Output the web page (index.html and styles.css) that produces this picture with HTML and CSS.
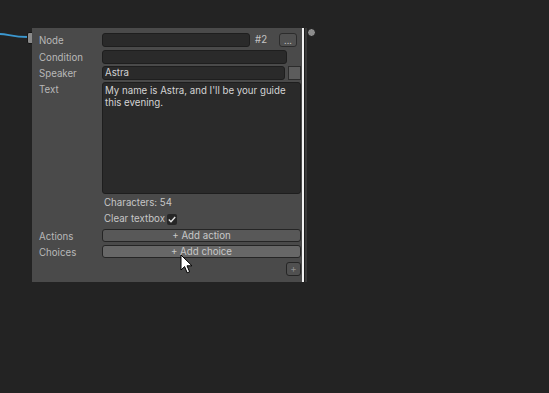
FILE: index.html
```
<!DOCTYPE html>
<html lang="en">

<head>
    <meta charset="UTF-8">
    <title>Dialogue node</title>
    <link rel="stylesheet" href="styles.css">
</head>

<body>
    <div class="graph">
        <!-- incoming edge -->
        <svg class="edge" width="32" height="20" viewBox="0 0 32 20">
            <path d="M0 6 C 8 6, 12 9, 28 9" stroke="#3b97cf" stroke-width="2" fill="none" />
        </svg>
        <div class="port-in"></div>

        <div class="node">
            <div class="row row-node">
                <span class="label">Node</span>
                <div class="field field-node"></div>
                <span class="node-id">#2</span>
                <button class="btn btn-more">...</button>
            </div>
            <div class="row row-cond">
                <span class="label">Condition</span>
                <div class="field field-cond"></div>
            </div>
            <div class="row row-speaker">
                <span class="label">Speaker</span>
                <div class="field field-cond">Astra</div>
                <div class="swatch"></div>
            </div>
            <div class="row row-text">
                <span class="label">Text</span>
                <div class="field textarea">My name is Astra, and I'll be your guide this evening.</div>
            </div>
            <div class="row row-info">
                <span class="label"></span>
                <span class="info">Characters: 54</span>
            </div>
            <div class="row row-check">
                <span class="label"></span>
                <span class="info">Clear textbox</span>
                <span class="checkbox">
                    <svg width="8" height="7" viewBox="0 0 8 7">
                        <path d="M0.8 3.6 L3 5.8 L7.2 1" stroke="#e6e6e6" stroke-width="1.4" fill="none" />
                    </svg>
                </span>
            </div>
            <div class="row row-btn">
                <span class="label">Actions</span>
                <button class="btn btn-wide">+ Add action</button>
            </div>
            <div class="row row-btn">
                <span class="label">Choices</span>
                <button class="btn btn-wide hover">+ Add choice</button>
            </div>
            <div class="row row-end">
                <button class="btn btn-plus">+</button>
            </div>
        </div>
        <div class="selection-bar"></div>
        <div class="port-out"></div>

        <svg class="cursor" width="13" height="21" viewBox="0 0 13 21">
            <path d="M1 1 L1 16 L4.6 12.6 L7.2 18.8 L9.6 17.8 L7 11.8 L12 11.8 Z" fill="#fff" stroke="#000" stroke-width="1" />
        </svg>
    </div>
</body>

</html>
```

FILE: styles.css
```
/* page */
body,
html {
    margin: 0;
    height: 100%;
    background-color: #232323;
    font-family: Inter, "Liberation Sans", sans-serif;
    font-size: 9.7px;
    color: #c2c2c2;
}

.graph {
    position: relative;
    width: 549px;
    height: 393px;
    overflow: hidden;
}

.edge {
    position: absolute;
    left: 0;
    top: 28px;
}

.port-in {
    position: absolute;
    left: 27px;
    top: 32px;
    width: 4px;
    height: 10px;
    background-color: #8a8a8a;
    border: 1px solid #151515;
    border-radius: 2px 0 0 2px;
}

/* node box */
.node {
    position: absolute;
    left: 32px;
    top: 28px;
    width: 270px;
    height: 254px;
    box-sizing: border-box;
    padding: 0 1px 0 7px;
    background-color: #4a4a4a;
    display: flex;
    flex-direction: column;
}

.selection-bar {
    position: absolute;
    left: 302px;
    top: 28px;
    width: 2px;
    height: 254px;
    background-color: #f2f2f2;
    border-right: 1px solid #1c1c1c;
    box-shadow: 2px 0 0 #3a3a3a;
}

.port-out {
    position: absolute;
    left: 307px;
    top: 28px;
    width: 7px;
    height: 7px;
    border-radius: 50%;
    background-color: #8c8c8c;
    border: 1px solid #151515;
}

.row {
    display: flex;
    align-items: center;
    height: 14px;
}

.row-node {
    margin-top: 5px;
}

.row-cond {
    margin-top: 3px;
}

.row-speaker {
    margin-top: 2px;
}

.label {
    width: 63px;
    flex-shrink: 0;
    color: #b8b8b8;
    align-self: flex-start;
    line-height: 14px;
    padding-top: 1px;
}

.field {
    box-sizing: border-box;
    height: 14px;
    background-color: #2a2a2a;
    border: 1px solid #1e1e1e;
    border-radius: 3px;
    padding: 0 2px;
    line-height: 12px;
    color: #d4d4d4;
}

.field-node {
    width: 148px;
}

.node-id {
    margin-left: 5px;
    width: 24px;
    color: #c4c4c4;
    align-self: flex-start;
    line-height: 13px;
}

.field-cond {
    width: 185px;
}

.swatch {
    margin-left: 3px;
    width: 13px;
    height: 14px;
    box-sizing: border-box;
    background-color: #5c5c5c;
    border: 1px solid #2c2c2c;
}

.row-text {
    height: 112px;
    margin-top: 2px;
    align-items: flex-start;
}

.textarea {
    width: 200px;
    height: 112px;
    line-height: 12px;
    padding: 2px 2px;
}

.row-info {
    margin-top: 2px;
}

.row-check {
    margin-top: 2px;
}

.info {
    padding-left: 2px;
    color: #c6c6c6;
    line-height: 14px;
}

.checkbox {
    margin-left: 2px;
    width: 10px;
    height: 11px;
    background-color: #262626;
    border-radius: 2px;
    display: flex;
    align-items: center;
    justify-content: center;
}

.btn {
    font-family: inherit;
    font-size: 9.7px;
    color: #c8c8c8;
    background-color: #585858;
    border: 1px solid #252525;
    border-radius: 3px;
    padding: 0;
    box-sizing: border-box;
    cursor: pointer;
}

.btn-more {
    width: 18px;
    height: 14px;
    line-height: 14px;
    padding-bottom: 2px;
    font-size: 9px;
    color: #bdbdbd;
    background-color: #505050;
    border-color: #2c2c2c;
}

.row-btn {
    margin-top: 3px;
    height: 13px;
}

.btn-wide {
    width: 200px;
    height: 13px;
    line-height: 11px;
}

.btn-wide.hover {
    background-color: #676767;
}

.row-end {
    justify-content: flex-end;
    margin-top: 4px;
}

.btn-plus {
    width: 15px;
    height: 14px;
    line-height: 12px;
    color: #8e8e8e;
    background-color: #505050;
}

.cursor {
    position: absolute;
    left: 180px;
    top: 254px;
}
```
